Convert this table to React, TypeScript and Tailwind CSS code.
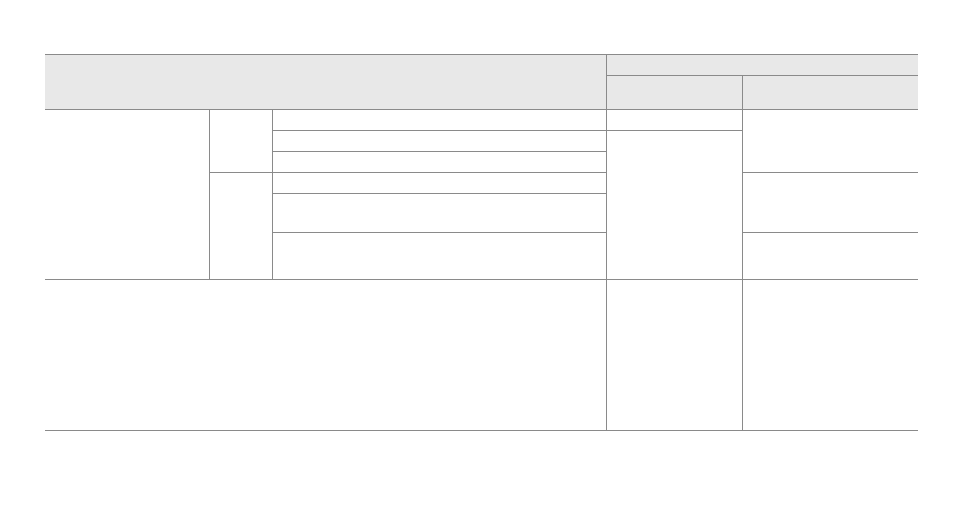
import React from "react";

const Cell = ({ className = "" }: { className?: string }) => (
  <div className={`bg-white ${className}`} />
);

const App = () => {
  return (
    <div className="w-[964px] h-[510px] bg-white pt-[54px] pl-[45px]">
      <div className="grid w-[873px] grid-cols-[164px_62px_333px_135px_175px] grid-rows-[20px_33px_20px_20px_20px_20px_38px_46px_150px] gap-px bg-[#8a8a8a] py-px">
        {/* header */}
        <Cell className="col-start-1 col-span-3 row-start-1 row-span-2 !bg-[#e8e8e8]" />
        <Cell className="col-start-4 col-span-2 row-start-1 !bg-[#e8e8e8]" />
        <Cell className="col-start-4 row-start-2 !bg-[#e8e8e8]" />
        <Cell className="col-start-5 row-start-2 !bg-[#e8e8e8]" />

        {/* body group */}
        <Cell className="col-start-1 row-start-3 row-span-6" />
        <Cell className="col-start-2 row-start-3 row-span-3" />
        <Cell className="col-start-2 row-start-6 row-span-3" />
        <Cell className="col-start-3 row-start-3" />
        <Cell className="col-start-3 row-start-4" />
        <Cell className="col-start-3 row-start-5" />
        <Cell className="col-start-3 row-start-6" />
        <Cell className="col-start-3 row-start-7" />
        <Cell className="col-start-3 row-start-8" />
        <Cell className="col-start-4 row-start-3" />
        <Cell className="col-start-4 row-start-4 row-span-5" />
        <Cell className="col-start-5 row-start-3 row-span-3" />
        <Cell className="col-start-5 row-start-6 row-span-2" />
        <Cell className="col-start-5 row-start-8" />

        {/* footer row */}
        <Cell className="col-start-1 col-span-3 row-start-9" />
        <Cell className="col-start-4 row-start-9" />
        <Cell className="col-start-5 row-start-9" />
      </div>
    </div>
  );
};

export default App;
